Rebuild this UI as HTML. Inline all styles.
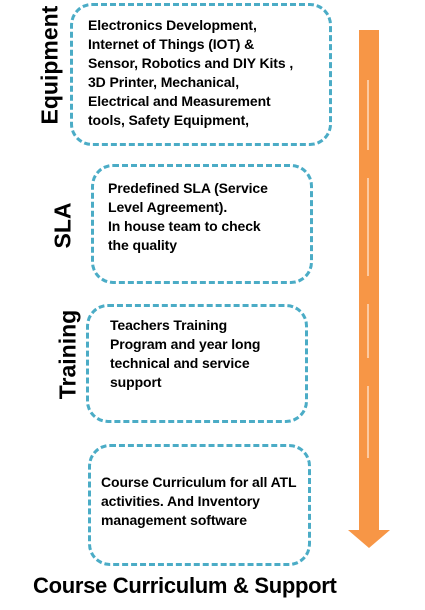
<!DOCTYPE html>
<html><head><style>
body{margin:0;width:425px;height:610px;background:#fff;position:relative;overflow:hidden;font-family:"Liberation Sans",sans-serif;}
.box{position:absolute;border:3px dashed #4bacc6;border-radius:22px;box-sizing:border-box;}
.t{position:absolute;font-weight:bold;font-size:14px;letter-spacing:-0.1px;line-height:19px;color:#000;white-space:nowrap;}
.lab{position:absolute;font-weight:bold;font-size:23px;color:#000;transform:rotate(-90deg);transform-origin:center;white-space:nowrap;}
</style></head><body>
<div class="box" style="left:70px;top:3px;width:262px;height:143px"></div>
<div class="t" style="left:88px;top:16px">Electronics Development,<br>Internet of Things (IOT) &amp;<br>Sensor, Robotics and DIY Kits ,<br>3D Printer, Mechanical,<br>Electrical and Measurement<br>tools, Safety Equipment,</div>
<div class="box" style="left:91px;top:164px;width:222px;height:120px"></div>
<div class="t" style="left:108px;top:179px">Predefined SLA (Service<br>Level Agreement).<br>In house team to check<br>the quality</div>
<div class="box" style="left:86px;top:304px;width:222px;height:119px"></div>
<div class="t" style="left:110px;top:316px">Teachers Training<br>Program and year long<br>technical and service<br>support</div>
<div class="box" style="left:88px;top:444px;width:223px;height:122px"></div>
<div class="t" style="left:101px;top:473px">Course Curriculum for all ATL<br>activities. And Inventory<br>management software</div>
<div class="lab" style="left:-5px;top:56px;width:110px;text-align:center">Equipment</div>
<div class="lab" style="left:33px;top:212px;width:60px;text-align:center">SLA</div>
<div class="lab" style="left:23px;top:341px;width:90px;text-align:center">Training</div>
<svg style="position:absolute;left:0;top:0" width="425" height="610">
<rect x="359" y="30" width="20" height="502" fill="#f79646"/>
<line x1="368" y1="80" x2="368" y2="150" stroke="#fff" stroke-width="1"/>
<line x1="368" y1="178" x2="368" y2="276" stroke="#fff" stroke-width="1"/>
<line x1="368" y1="304" x2="368" y2="358" stroke="#fff" stroke-width="1"/>
<line x1="368" y1="386" x2="368" y2="458" stroke="#fff" stroke-width="1"/>
<polygon points="348,530 390,530 369,548" fill="#f79646"/>
</svg>
<div style="position:absolute;left:33px;top:573px;font-weight:bold;font-size:22px;letter-spacing:-0.3px;white-space:nowrap">Course Curriculum &amp; Support</div>
</body></html>
